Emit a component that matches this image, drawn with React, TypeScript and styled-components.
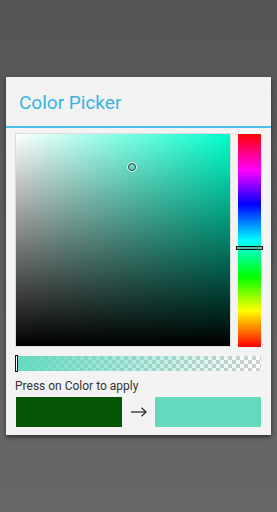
import styled, { createGlobalStyle } from "styled-components";

const GlobalStyle = createGlobalStyle`
  html, body {
    margin: 0;
    padding: 0;
  }
  body {
    font-family: Roboto, "Liberation Sans", sans-serif;
  }
`;

const HUE = "rgb(0, 255, 204)";
const PICKED = "rgb(100, 217, 192)";
const OLD = "#035403";

const Page = styled.div({
  height: 512,
  boxSizing: "border-box",
  padding: "77px 6px 0 6px",
  background: "linear-gradient(#555555, #676767)",
});

const Dialog = styled.div({
  width: 265,
  background: "#f3f3f3",
  boxShadow: "0 2px 4px rgba(0,0,0,0.55)",
  display: "flex",
  flexDirection: "column",
});

const Header = styled.div({
  height: 49,
  display: "flex",
  alignItems: "center",
  paddingLeft: 13,
  paddingTop: 1,
  boxSizing: "border-box",
  color: "#33b5e5",
  fontSize: 19,
});

const Divider = styled.div({
  height: 2,
  background: "#33b5e5",
  opacity: 0.85,
});

const Body = styled.div({
  display: "flex",
  flexDirection: "column",
  padding: "6px 10px 8px 10px",
});

const PickerRow = styled.div({
  display: "flex",
  gap: 7,
  height: 213,
});

const SatValSquare = styled.div<{ $hue: string }>`
  position: relative;
  flex: 1;
  border: 1px solid #dcdcdc;
  margin: -1px 0 0 -1px;
  background:
    linear-gradient(to bottom, rgba(0, 0, 0, 0), #000),
    linear-gradient(to right, #fff, ${(p) => p.$hue});
`;

const Cursor = styled.div({
  position: "absolute",
  width: 6,
  height: 6,
  borderRadius: "50%",
  border: "1.5px solid #444",
  boxShadow: "0 0 0 1px rgba(255,255,255,0.8)",
  transform: "translate(-50%, -50%)",
});

const HueBar = styled.div({
  position: "relative",
  width: 23,
  background:
    "linear-gradient(to bottom, #ff0000, #ff00ff 17%, #0000ff 33%, #00ffff 50%, #00ff00 67%, #ffff00 83%, #ff0000)",
});

const HueThumb = styled.div({
  position: "absolute",
  left: -2,
  right: -2,
  height: 2,
  border: "1px solid #111",
  background: "rgba(120,160,150,0.7)",
  transform: "translateY(-50%)",
});

const AlphaBar = styled.div<{ $color: string }>`
  position: relative;
  margin-top: 9px;
  height: 15px;
  background:
    linear-gradient(to right, ${(p) => p.$color}, rgba(100, 217, 192, 0)),
    repeating-conic-gradient(#cfcfcf 0% 25%, #ffffff 0% 50%) 0 0 / 8px 8px;
`;

const AlphaThumb = styled.div({
  position: "absolute",
  left: -1,
  top: -1,
  bottom: -1,
  width: 1,
  border: "1px solid #111",
  background: "#fff",
});

const Hint = styled.div({
  marginTop: 7,
  marginLeft: -1,
  fontSize: 12,
  color: "#333",
  lineHeight: "16px",
});

const SwatchRow = styled.div({
  display: "flex",
  alignItems: "center",
  marginTop: 3,
  height: 30,
});

const Swatch = styled.div<{ $color: string }>`
  width: 106px;
  height: 30px;
  background: ${(p) => p.$color};
`;

const ArrowCell = styled.div({
  flex: 1,
  display: "flex",
  justifyContent: "center",
  alignItems: "center",
});

const ArrowIcon = () => (
  <svg width="16" height="10" viewBox="0 0 16 10" fill="none" stroke="#222" strokeWidth="1.2">
    <path d="M0 5H15" />
    <path d="M10.5 0.8L15 5L10.5 9.2" />
  </svg>
);

export default function App() {
  const sat = 0.54;
  const val = 0.845;
  const hue = 168;

  return (
    <>
      <GlobalStyle />
      <Page>
        <Dialog>
          <Header>Color Picker</Header>
          <Divider />
          <Body>
            <PickerRow>
              <SatValSquare $hue={HUE}>
                <Cursor style={{ left: `${sat * 100}%`, top: `${(1 - val) * 100}%` }} />
              </SatValSquare>
              <HueBar>
                <HueThumb style={{ top: `${(1 - hue / 360) * 100}%` }} />
              </HueBar>
            </PickerRow>
            <AlphaBar $color={PICKED}>
              <AlphaThumb />
            </AlphaBar>
            <Hint>Press on Color to apply</Hint>
            <SwatchRow>
              <Swatch $color={OLD} />
              <ArrowCell>
                <ArrowIcon />
              </ArrowCell>
              <Swatch $color={PICKED} />
            </SwatchRow>
          </Body>
        </Dialog>
      </Page>
    </>
  );
}
